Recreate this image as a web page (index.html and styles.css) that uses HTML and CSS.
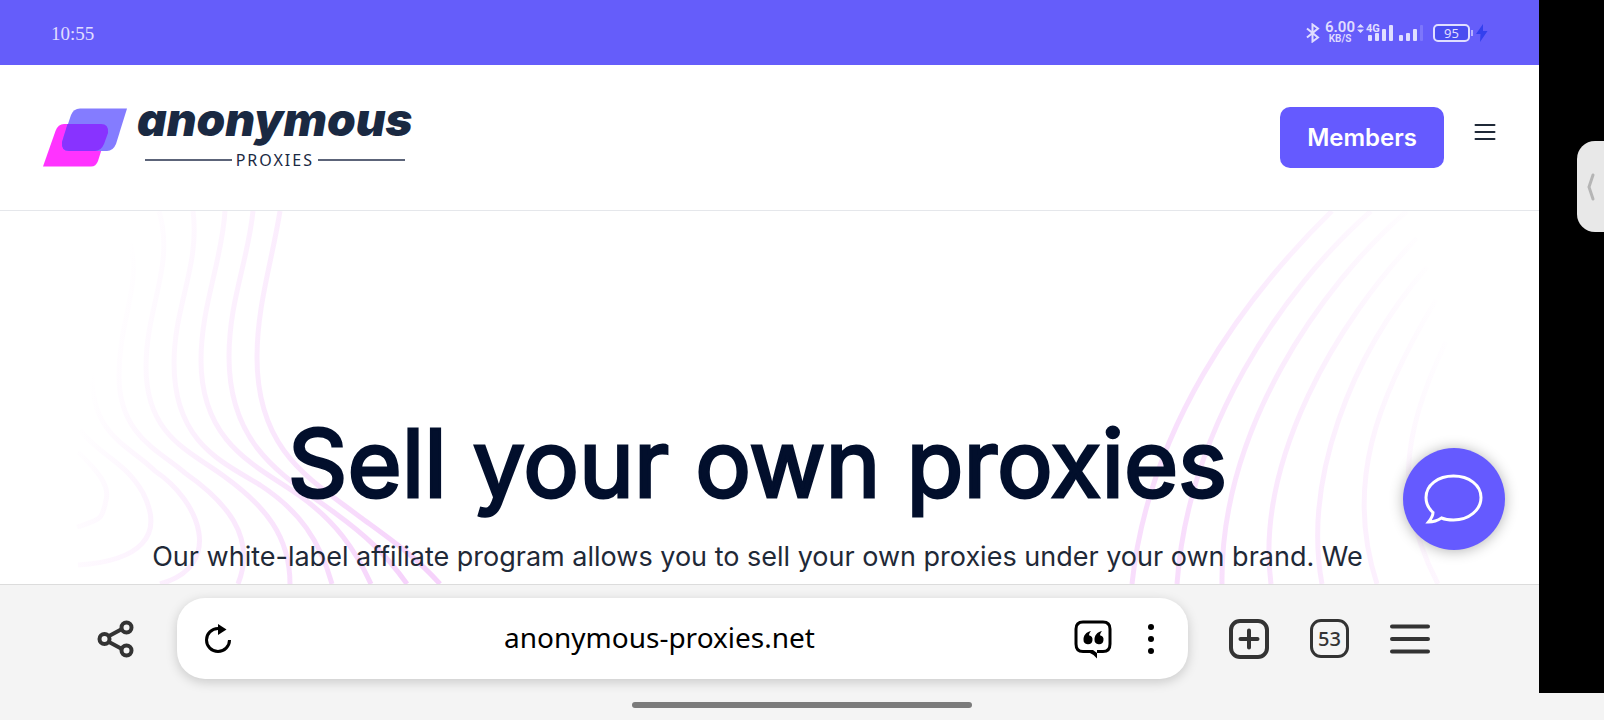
FILE: index.html
```html
<!DOCTYPE html>
<html lang="en">
  <head>
    <meta charset="utf-8">
    <meta name="viewport" content="width=device-width, initial-scale=1.0">
    <title>Sell your own proxies</title>
    <link rel="stylesheet" href="styles.css">
  </head>

  <body>
    <div class="device">
      <div class="screen">

        <div class="status">
          <span class="clock">10:55</span>
          <div class="status-icons">
            <svg class="bluetooth" width="14" height="20" viewBox="0 0 14 20"><path d="M1 5.500l11 9-5.500 4V1.500l5.500 4-11 9"/></svg>
            <div class="speed"><b>6.00</b><small>KB/S</small></div>
            <div class="signal">
              <span class="net">4G</span>
              <svg width="42" height="20" viewBox="0 0 42 20">
                <path d="M0 4.500l3.500-3.500 3.500 3.500zM0 6.500l3.500 3.500 3.500-3.500z"/>
                <rect x="11" y="12" width="4" height="6" rx="1"/>
                <rect x="18" y="10" width="4" height="8" rx="1"/>
                <rect x="25" y="6" width="4" height="12" rx="1"/>
                <rect x="32" y="2" width="4" height="16" rx="1"/>
              </svg>
            </div>
            <svg class="signal2" width="25" height="20" viewBox="0 0 25 20">
              <rect x="0" y="12" width="4" height="6" rx="1"/>
              <rect x="7" y="10" width="4" height="8" rx="1"/>
              <rect x="14" y="6" width="4" height="12" rx="1"/>
              <rect x="21" y="2" width="3" height="16" rx="1" opacity=".2"/>
            </svg>
            <span class="battery">95</span>
            <svg class="bolt" width="12" height="20" viewBox="0 0 12 20"><path d="M7 1L0 11h4.500L4 19l7.500-11H7z"/></svg>
          </div>
        </div>

        <header class="header">
          <a class="logo" href="#">
            <svg class="logo-mark" width="86" height="60" viewBox="0 0 86 60">
              <path fill="#ff33ff" d="M0 58.500L12.500 23Q15 16 21 16H58q8 0 6 8L55 53q-2 5.500-7 5.500z"/>
              <path fill="#847cff" d="M84 .5L73 36q-3 7-9 7H26q-8 0-7-9L28 7Q30.500.5 37 .5z"/>
              <path fill="#8833ff" d="M24.500 16H58q8 0 7 9l-4 11q-3 7-9 7H26q-8 0-7-9z"/>
            </svg>
            <span class="logo-text">
              <span class="logo-name">anonymous</span>
              <span class="logo-sub">PROXIES</span>
            </span>
          </a>
          <div class="header-right">
            <button class="members" type="button">Members</button>
            <button class="menu" type="button" aria-label="Menu">
              <svg width="22" height="18" viewBox="0 0 22 18"><path d="M1.500 2h19M1.500 9h19M1.500 16h19"/></svg>
            </button>
          </div>
        </header>

        <main class="hero">
          <svg class="waves waves-left" width="460" height="373" viewBox="0 0 460 373">
            <defs>
              <linearGradient id="fadeLeft" gradientUnits="userSpaceOnUse" x1="82" y1="190" x2="430" y2="290">
                <stop offset="0" stop-color="#d946ef" stop-opacity="0"/>
                <stop offset="1" stop-color="#d946ef" stop-opacity=".24"/>
              </linearGradient>
            </defs>
            <g stroke="url(#fadeLeft)">
              <path d="M280 0C272 50 257 95 257 146C257 240 310 268 360 306C390 328 415 345 440 373"/>
              <path d="M253 0C248 50 229 90 229 146C229 240 290 268 335 302C365 324 385 342 407 373"/>
              <path d="M225 0C222 50 201 95 201 149C201 235 260 256 300 285C335 310 355 338 371 373"/>
              <path d="M193 0C200 55 174 95 174 152C174 230 220 250 260 274C300 300 320 330 332 373"/>
              <path d="M159 0C175 55 146 95 146 156C146 225 190 240 225 266C265 295 290 325 290 373"/>
              <path d="M125 17C147 70 119 100 119 165C119 225 160 240 185 262C225 290 257 325 238 373"/>
              <path d="M106 76C95 110 92 130 92 165C92 225 130 235 155 260C200 290 225 355 160 373"/>
              <path d="M80 219C100 245 125 250 143 282C165 325 140 350 78 354"/>
              <path d="M78 241C98 260 110 275 106 289C102 310 100 308 77 316"/>
            </g>
          </svg>
          <svg class="waves waves-right" width="439" height="373" viewBox="0 0 439 373">
            <defs>
              <linearGradient id="fadeRight" gradientUnits="userSpaceOnUse" x1="335" y1="50" x2="30" y2="130">
                <stop offset="0" stop-color="#d946ef" stop-opacity="0"/>
                <stop offset="1" stop-color="#d946ef" stop-opacity=".18"/>
              </linearGradient>
            </defs>
            <g stroke="url(#fadeRight)">
              <path d="M232 0C140 90 48 220 32 373"/>
              <path d="M271 0C180 80 88 220 77 373"/>
              <path d="M307 0C220 75 120 220 122 373"/>
              <path d="M317 27C237 110 155 250 171 373"/>
              <path d="M327 56C250 145 203 270 222 373"/>
              <path d="M336 89C275 190 245 275 277 373"/>
              <path d="M346 131C300 225 295 290 338 373"/>
            </g>
          </svg>
          <h1>Sell your own proxies</h1>
          <p>Our white-label affiliate program allows you to sell your own proxies under your own brand. We</p>
          <button class="chat" type="button" aria-label="Chat">
            <svg width="60" height="52" viewBox="0 0 60 52"><path d="M9 39.500C4 35 2 30 2 24.500C2 12 14 3 29.500 3S57 12 57 24.500S45 47 29.500 47C25 47 21 46.500 17.500 45C13 48 9 49 4.500 49C7 46 9 43 9 39.500z"/></svg>
          </button>
        </main>

        <nav class="toolbar">
          <button class="tool" type="button" aria-label="Share">
            <svg width="40" height="40" viewBox="0 0 40 40"><path d="M13 17l13-7M13 23l13 7"/><circle cx="8.500" cy="20" r="5"/><circle cx="30.500" cy="8.500" r="5"/><circle cx="30.500" cy="31.500" r="5"/></svg>
          </button>
          <div class="address">
            <button class="tool reload" type="button" aria-label="Reload">
              <svg width="28" height="32" viewBox="0 0 28 32"><path d="M14 5.500A11.500 11.500 0 1 0 25.500 17"/><path class="solid" d="M14 1l8.500 5.500L14 12z"/></svg>
            </button>
            <input class="url" type="text" value="anonymous-proxies.net" aria-label="Address">
            <button class="tool quote" type="button" aria-label="Quotes">
              <svg width="40" height="40" viewBox="0 0 40 40"><path d="M18 32.500H10Q3 32.500 3 25V10Q3 3 10 3H30Q37 3 37 10V25Q37 32.500 30 32.500H24"/><path class="solid" d="M16 31h4l4 3v5.500q-3-4-8-6z"/><path class="solid" d="M18 12c-5 1-7.500 4.500-7.500 8.500a4.500 4.500 0 1 0 5.500-4.200c0-1.500 1-3 2-4.300zM29 12c-5 1-7.500 4.500-7.500 8.500a4.500 4.500 0 1 0 5.500-4.200c0-1.500 1-3 2-4.300z"/></svg>
            </button>
            <button class="tool more" type="button" aria-label="More">
              <svg width="8" height="32" viewBox="0 0 8 32"><g class="solid"><circle cx="4" cy="4" r="3"/><circle cx="4" cy="16" r="3"/><circle cx="4" cy="28" r="3"/></g></svg>
            </button>
          </div>
          <button class="tool" type="button" aria-label="New tab">
            <svg width="40" height="40" viewBox="0 0 40 40"><rect x="2" y="2" width="36" height="36" rx="9"/><path d="M20 11.500v17M11.500 20h17" stroke-linecap="round"/></svg>
          </button>
          <button class="tool tabs" type="button">53</button>
          <button class="tool" type="button" aria-label="Browser menu">
            <svg width="40" height="40" viewBox="0 0 40 40"><path d="M2 7.500h36M2 20h36M2 32.500h36" stroke-linecap="round"/></svg>
          </button>
        </nav>
      </div>

      <aside class="edge">
        <button class="handle" type="button" aria-label="Open side panel">
          <svg width="10" height="28" viewBox="0 0 10 28"><path d="M7 2l-4 12 4 12"/></svg>
        </button>
      </aside>
    </div>

    <div class="gesture"><span></span></div>
  </body>
</html>
```
FILE: styles.css
```css
* { box-sizing: border-box }
body {
  margin: 0;
  min-height: 100vh;
  display: flex;
  flex-direction: column;
  background: #f4f4f4;
  font-family: Inter, "Liberation Sans", sans-serif;
}
button {
  border: 0;
  padding: 0;
  background: none;
  font-family: inherit;
  cursor: pointer;
}
svg {
  display: block;
  flex: none;
}
.device {
  flex: 1;
  display: flex;
}
.screen {
  flex: 1;
  min-width: 0;
  display: flex;
  flex-direction: column;
  background: #fff;
}

/* status bar */
.status {
  height: 65px;
  padding: 0 51px;
  display: flex;
  align-items: center;
  justify-content: space-between;
  background: #655dfa;
  color: #e0deff;
}
.clock {
  padding-top: 2px;
  font: 19px "Liberation Serif", serif;
}
.status-icons {
  display: flex;
  align-items: center;
  fill: #e0deff;
}
.bluetooth {
  fill: none;
  stroke: #e0deff;
  stroke-width: 2;
}
.speed {
  margin: 0 2px 0 5px;
  display: flex;
  flex-direction: column;
  align-items: center;
  font-family: Roboto, sans-serif;
}
.speed b {
  font-size: 15px;
  line-height: 12px;
  font-weight: 600;
}
.speed small {
  font-size: 10px;
  line-height: 11px;
  font-weight: 600;
}
.signal { position: relative }
.net {
  position: absolute;
  top: 0;
  left: 9px;
  font: bold 11px/11px Roboto, sans-serif;
}
.battery {
  position: relative;
  width: 37px;
  height: 18px;
  margin: 0 6px 0 9px;
  border: 2px solid #e0deff;
  border-radius: 5px;
  background: #4a4df0;
  font: 13px/14px "Noto Sans", sans-serif;
  text-align: center;
}
.battery:after {
  content: "";
  position: absolute;
  top: 4px;
  right: -5px;
  width: 2px;
  height: 6px;
  background: #b5b0ff;
}
.bolt { fill: #3340ee }

/* site header */
.header {
  height: 146px;
  padding: 0 43px;
  display: flex;
  align-items: center;
  justify-content: space-between;
  border-bottom: 1px solid #e5e7eb;
}
.logo {
  display: flex;
  align-items: center;
  gap: 8px;
  color: #1a2942;
  text-decoration: none;
}
.logo-text {
  display: flex;
  flex-direction: column;
}
.logo-name {
  font: italic 900 46px/22px Inter, sans-serif;
}
.logo-sub {
  margin: 22px 8px 0;
  display: flex;
  align-items: center;
  gap: 4px;
  font: 16px/16px "Noto Sans", sans-serif;
  letter-spacing: 2px;
}
.logo-sub:before,
.logo-sub:after {
  content: "";
  flex: 1;
  height: 2px;
  background: #5c6479;
}
.header-right {
  display: flex;
  align-items: center;
  gap: 30px;
}
.members {
  padding: 0 27px;
  border-radius: 10px;
  background: #655aff;
  color: #fff;
  font-size: 24px;
  line-height: 61px;
  font-weight: 600;
}
.menu { margin-bottom: 12px }
.menu svg {
  fill: none;
  stroke: #1f2937;
  stroke-width: 2;
  stroke-linecap: round;
}

/* hero */
.hero {
  position: relative;
  flex: 1;
  padding: 198px 24px 0 0;
  overflow: hidden;
  text-align: center;
}
.waves {
  position: absolute;
  top: 0;
  fill: none;
  stroke-width: 5;
}
.waves-left { left: 0 }
.waves-right { right: 0 }
.hero h1 {
  position: relative;
  margin: 0;
  color: #020f2c;
  font-size: 93px;
  line-height: 108px;
  font-weight: 400;
  -webkit-text-stroke: 3px #020f2c;
}
.hero p {
  position: relative;
  margin: 20px 0 0;
  color: #1f2937;
  font-size: 27px;
  line-height: 40px;
}
.chat {
  position: absolute;
  right: 34px;
  bottom: 34px;
  width: 102px;
  height: 102px;
  display: flex;
  align-items: center;
  justify-content: center;
  border-radius: 50%;
  background: #655aff;
  box-shadow: 0 1px 14px rgba(0, 0, 0, .3);
}
.chat svg {
  fill: none;
  stroke: #fff;
  stroke-width: 3;
}

/* browser toolbar */
.toolbar {
  height: 109px;
  padding: 0 109px 1px 96px;
  display: flex;
  align-items: center;
  gap: 41px;
  border-top: 1px solid #dcdcdc;
  background: #f4f4f4;
}
.tool svg {
  fill: none;
  stroke: #333;
  stroke-width: 4;
}
.tool .solid {
  fill: #000;
  stroke: none;
}
.address {
  flex: 1;
  min-width: 0;
  height: 81px;
  padding: 0 33px 0 27px;
  display: flex;
  align-items: center;
  border-radius: 28px;
  background: #fff;
  box-shadow: 0 3px 12px rgba(0, 0, 0, .18);
}
.address .tool svg {
  stroke: #000;
  stroke-width: 3;
}
.url {
  flex: 1;
  min-width: 0;
  border: 0;
  padding: 0 0 4px 14px;
  outline: 0;
  background: none;
  text-align: center;
  font: 28px/40px "Noto Sans", sans-serif;
}
.more { margin-left: 34px }
.tabs {
  width: 39px;
  height: 39px;
  border: 3px solid #333;
  border-radius: 11px;
  color: #333;
  font: 500 20px/32px "Noto Sans", sans-serif;
}

/* right edge and home gesture */
.edge {
  width: 65px;
  padding-top: 141px;
  display: flex;
  align-items: flex-start;
  justify-content: flex-end;
  background: #000;
}
.handle {
  width: 27px;
  height: 91px;
  display: flex;
  align-items: center;
  justify-content: center;
  border-radius: 18px 0 0 18px;
  background: #e8e8e8;
}
.handle svg {
  fill: none;
  stroke: #b5b5b5;
  stroke-width: 3;
  stroke-linecap: round;
}
.gesture {
  height: 27px;
  padding-top: 9px;
}
.gesture span {
  display: block;
  width: 340px;
  height: 6px;
  margin: 0 auto;
  border-radius: 3px;
  background: #7b7b7b;
}
```
